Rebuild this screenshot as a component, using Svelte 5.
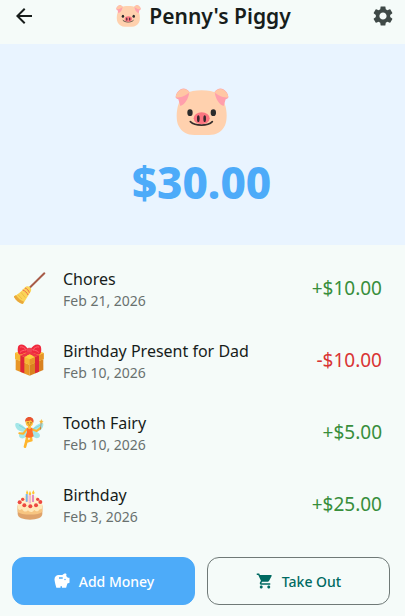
<script lang="ts">
	type Icon = 'broom' | 'gift' | 'fairy' | 'cake';

	interface Transaction {
		id: number;
		icon: Icon;
		title: string;
		date: string;
		amount: number;
	}

	let name = $state("Penny's Piggy");

	let transactions = $state<Transaction[]>([
		{ id: 4, icon: 'broom', title: 'Chores', date: 'Feb 21, 2026', amount: 10 },
		{ id: 3, icon: 'gift', title: 'Birthday Present for Dad', date: 'Feb 10, 2026', amount: -10 },
		{ id: 2, icon: 'fairy', title: 'Tooth Fairy', date: 'Feb 10, 2026', amount: 5 },
		{ id: 1, icon: 'cake', title: 'Birthday', date: 'Feb 3, 2026', amount: 25 }
	]);

	const balance = $derived(transactions.reduce((sum, t) => sum + t.amount, 0));

	function signed(amount: number) {
		return `${amount < 0 ? '-' : '+'}$${Math.abs(amount).toFixed(2)}`;
	}
</script>

{#snippet pig()}
	<svg class="pig" viewBox="163 40 162 144" aria-hidden="true">
		<path d="M243 47c-40 0-60 12-69 40-8 22-8 52 0 67 9 18 26 27 47 27h44c21 0 38-9 47-27 8-15 8-45 0-67-9-28-29-40-69-40z" fill="#ffd1ae" />
		<path d="M206 52c-6-9-17-13-26-8-8 5-15 14-15 23 0 5 5 5 8 7l6 20c14-5 24-20 27-42z" fill="#ff9fac" />
		<path d="M207 53c-6-9-18-13-27-8-8 5-15 14-15 23 16 3 32-7 42-15z" fill="#ffc7a4" />
		<path d="M282 52c6-9 17-13 26-8 8 5 15 14 15 23 0 5-5 5-8 7l-6 20c-14-5-24-20-27-42z" fill="#ff9fac" />
		<path d="M281 53c6-9 18-13 27-8 8 5 15 14 15 23-16 3-32-7-42-15z" fill="#ffc7a4" />
		<ellipse cx="208" cy="114" rx="8" ry="10" fill="#2b2b2b" />
		<ellipse cx="278" cy="114" rx="8" ry="10" fill="#2b2b2b" />
		<path d="M209 141c15 14 52 14 66 0" fill="none" stroke="#352d2b" stroke-width="5" stroke-linecap="round" />
		<ellipse cx="243" cy="131" rx="24" ry="18" fill="#fb7480" />
		<ellipse cx="233" cy="132" rx="4" ry="10" fill="#37272b" />
		<ellipse cx="252" cy="132" rx="4" ry="10" fill="#37272b" />
	</svg>
{/snippet}

{#snippet emoji(icon: Icon)}
	{#if icon === 'broom'}
		<svg viewBox="42 51 96 96" aria-hidden="true">
			<path d="M89 98l44-43" stroke="#a75b48" stroke-width="6" stroke-linecap="round" />
			<path d="M73 99c4-5 11-7 16-3 6 4 6 11 1 17L69 147c-10-2-22-11-28-23 12-5 23-14 32-25z" fill="#fbd457" />
			<path d="M41 124l7-3c6 9 13 15 24 19l-4 7c-11-2-22-11-27-23z" fill="#e9a83c" />
			<path d="M54 119l12 13m-3-20l13 16" stroke="#e8ae3b" stroke-width="2" />
			<path d="M68 105c7 2 13 8 16 15m-9-21c7 2 11 8 13 14" fill="none" stroke="#ed6c4f" stroke-width="3" />
		</svg>
	{:else if icon === 'gift'}
		<svg viewBox="42 42 96 96" aria-hidden="true">
			<path d="M47 87l42 17v33l-42-17z" fill="#e89627" />
			<path d="M130 87l-41 17v33l41-17z" fill="#d98220" />
			<path d="M45 69l43-14 43 14v18l-42 18-44-18z" fill="#f6b735" />
			<path d="M89 88l42-19v18l-42 18z" fill="#e69428" />
			<path d="M45 69l44 19 42-19-43-15z" fill="#ffcb45" />
			<path d="M61 76l12 5v49l-12-5zm44 5l12-5v49l-12 5z" fill="#df2637" />
			<path d="M61 76l40-16 10 4-38 17zm44 5L69 64l9-4 39 16z" fill="#ef3445" />
			<path d="M86 61C75 40 56 40 54 51c-2 10-1 20 5 23 7 0 18-4 27-13zm4 0c9-21 31-22 33-9 2 11 0 20-6 22-8 0-18-4-27-13z" fill="#ef293d" />
			<path d="M60 51c7-2 14 2 19 9-7 0-14 2-19 7m57-16c-7-2-14 2-19 9 7 0 13 2 18 7" fill="none" stroke="#ff6370" stroke-width="3" />
			<path d="M80 77l9-4 9 4-9 8z" fill="#ffd43e" />
			<rect x="81" y="53" width="15" height="14" rx="5" fill="#f04453" />
		</svg>
	{:else if icon === 'fairy'}
		<svg viewBox="42 48 96 96" aria-hidden="true">
			<path d="M80 88C66 71 48 64 46 72s6 24 26 23c-14 1-20 12-10 19 8 4 17-2 21-12z" fill="#a3e6e8" />
			<path d="M96 88c14-17 33-24 34-16s-6 24-25 23c13 1 20 12 11 18-8 4-18-1-22-11z" fill="#a3e6e8" />
			<path d="M79 88L57 76m40 12l23-12" stroke="#7fd6dd" stroke-width="3" />
			<path d="M80 88l-10 13-12-1m38-12l14 5 11-9" fill="none" stroke="#ffb52d" stroke-width="6" stroke-linecap="round" stroke-linejoin="round" />
			<path d="M82 107l-2 14-5 19m17-32l2 13-11 3" fill="none" stroke="#ffb52d" stroke-width="8" stroke-linecap="round" stroke-linejoin="round" />
			<path d="M80 83h17l1 14 3 12c-7 5-17 5-25 1l5-14z" fill="#ff6c2b" />
			<path d="M84 78h9v7q-5 6-9 0z" fill="#ffc245" />
			<ellipse cx="88" cy="67" rx="11" ry="13" fill="#ffc33d" />
			<path d="M76 67c-3-9 5-17 12-16 9 0 15 7 12 17-3-1-5-5-8-7-4 2-10 2-14 1z" fill="#e85430" />
			<path d="M84 68v1m9-1v1" stroke="#57382a" stroke-width="3" stroke-linecap="round" />
			<path d="M85 74q4 3 7 0" fill="none" stroke="#b44833" stroke-width="2" />
			<path d="M121 89l3-24" stroke="#b36c39" stroke-width="2" />
			<path d="M124 57l2 5 5 1-4 3 1 5-4-3-4 3 1-5-4-3 5-1z" fill="#f4b637" />
		</svg>
	{:else}
		<svg viewBox="40 42 96 96" aria-hidden="true">
			<path d="M51 95v25c0 11 17 17 37 17s37-6 37-17V95z" fill="#dfa36b" />
			<path d="M51 92v21c9 11 64 12 74 0V92z" fill="#f7c581" />
			<ellipse cx="88" cy="92" rx="37" ry="17" fill="#fff0cb" />
			<path d="M51 92c0 20 8 17 13 12 5 11 13 11 18 4 6 9 14 7 19-1 7 10 14 3 17-3 4 5 7 0 7-12z" fill="#ffe8b9" />
			<path d="M60 75c3-12 50-13 56 0v12c-9 8-45 8-56 0z" fill="#fff0cb" />
			<path d="M78 60v23m9-23v28m10-26v22" stroke="#dd79bc" stroke-width="5" />
			<path d="M78 60v23" stroke="#6dbfe8" stroke-width="5" />
			<path d="M87 60v28" stroke="#fce9ff" stroke-width="2" />
			<path d="M79 48l4 9q-4 8-7 0zm9 2l4 10q-4 8-8 0zm10-2l4 9q-4 8-8 0z" fill="#ffc52e" />
			<g fill="#ed4941">
				<circle cx="66" cy="76" r="5" />
				<circle cx="111" cy="76" r="5" />
				<circle cx="57" cy="85" r="6" />
				<circle cx="71" cy="94" r="6" />
				<circle cx="89" cy="97" r="6" />
				<circle cx="106" cy="94" r="6" />
				<circle cx="119" cy="84" r="6" />
			</g>
		</svg>
	{/if}
{/snippet}

<div class="page">
	<header>
		<button class="icon-button" aria-label="Back">
			<svg viewBox="0 0 24 24"><path d="M20 11H7.83l5.59-5.59L12 4l-8 8 8 8 1.41-1.41L7.83 13H20v-2z" /></svg>
		</button>
		<h1>{@render pig()}<span>{name}</span></h1>
		<button class="icon-button settings" aria-label="Settings">
			<svg viewBox="0 0 24 24"><path d="M19.14 12.94c.04-.3.06-.61.06-.94 0-.32-.02-.64-.07-.94l2.03-1.58c.18-.14.23-.41.12-.61l-1.92-3.32c-.12-.22-.37-.29-.59-.22l-2.39.96c-.5-.38-1.03-.7-1.62-.94l-.36-2.54c-.04-.24-.24-.41-.48-.41h-3.84c-.24 0-.43.17-.47.41l-.36 2.54c-.59.24-1.13.57-1.62.94l-2.39-.96c-.22-.08-.47 0-.59.22L2.74 8.87c-.12.21-.08.47.12.61l2.03 1.58c-.05.3-.09.63-.09.94s.02.64.07.94l-2.03 1.58c-.18.14-.23.41-.12.61l1.92 3.32c.12.22.37.29.59.22l2.39-.96c.5.38 1.03.7 1.62.94l.36 2.54c.05.24.24.41.48.41h3.84c.24 0 .44-.17.47-.41l.36-2.54c.59-.24 1.13-.56 1.62-.94l2.39.96c.22.08.47 0 .59-.22l1.92-3.32c.12-.22.07-.47-.12-.61l-2.01-1.58zM12 15.6c-1.98 0-3.6-1.62-3.6-3.6s1.62-3.6 3.6-3.6 3.6 1.62 3.6 3.6-1.62 3.6-3.6 3.6z" /></svg>
		</button>
	</header>

	<section class="balance">
		{@render pig()}
		<strong>${balance.toFixed(2)}</strong>
	</section>

	<ul>
		{#each transactions as t (t.id)}
			<li>
				{@render emoji(t.icon)}
				<div class="details">
					<span class="title">{t.title}</span>
					<span class="date">{t.date}</span>
				</div>
				<span class="amount" class:negative={t.amount < 0}>{signed(t.amount)}</span>
			</li>
		{/each}
	</ul>

	<footer>
		<button class="action primary">
			<svg viewBox="0 0 24 24" aria-hidden="true"><path d="M19.83 7.5l-2.27-2.27c.07-.42.18-.81.32-1.15.08-.18.12-.37.12-.58 0-.83-.67-1.5-1.5-1.5-1.64 0-3.09.79-4 2h-5C4.46 4 2 6.46 2 9.5S4.5 21 4.5 21H10v-2h2v2h5.5l1.68-5.59 2.82-.94V7.5h-2.17zM13 9H8V7h5v2zm3 2c-.55 0-1-.45-1-1s.45-1 1-1 1 .45 1 1-.45 1-1 1z" /></svg>
			Add Money
		</button>
		<button class="action">
			<svg viewBox="0 0 24 24" aria-hidden="true"><path d="M7 18c-1.1 0-1.99.9-1.99 2S5.9 22 7 22s2-.9 2-2-.9-2-2-2zM1 2v2h2l3.6 7.59-1.35 2.45c-.16.28-.25.61-.25.96 0 1.1.9 2 2 2h12v-2H7.42c-.14 0-.25-.11-.25-.25l.03-.12.9-1.63h7.45c.75 0 1.41-.41 1.75-1.03l3.58-6.49c.08-.14.12-.31.12-.48 0-.55-.45-1-1-1H5.21l-.94-2H1zm16 16c-1.1 0-1.99.9-1.99 2s.89 2 1.99 2 2-.9 2-2-.9-2-2-2z" /></svg>
			Take Out
		</button>
	</footer>
</div>

<style>
	:global(body) {
		background: #f5fbf9;
	}

	.page {
		font-family: 'Noto Sans', 'Open Sans', sans-serif;
		color: #171d1b;
	}

	svg {
		display: block;
		flex: none;
		fill: currentColor;
	}

	button {
		font: inherit;
		cursor: pointer;
	}

	header {
		display: flex;
		align-items: center;
		justify-content: space-between;
		padding: 0 10px 12px 12px;
	}

	.icon-button {
		padding: 0;
		border: 0;
		background: none;
		color: inherit;
	}

	.icon-button svg {
		width: 24px;
		height: 24px;
	}

	.settings {
		color: #3f4947;
	}

	h1 {
		display: flex;
		align-items: center;
		gap: 8px;
		margin: 0;
		font-size: 21px;
		font-weight: 600;
		line-height: 32px;
	}

	h1 .pig {
		width: 25px;
		height: 24px;
	}

	.balance {
		display: flex;
		flex-direction: column;
		align-items: center;
		gap: 16px;
		padding: 44px 18px 33px 16px;
		background: #e9f4ff;
	}

	.balance .pig {
		width: 54px;
		height: 48px;
	}

	.balance strong {
		font-size: 44px;
		font-weight: 800;
		line-height: 60px;
		color: #4dabf9;
	}

	ul {
		margin: 0;
		padding: 7px 0 9px;
		list-style: none;
	}

	li {
		display: flex;
		align-items: center;
		gap: 17px;
		height: 72px;
		padding: 0 23px 0 14px;
	}

	li svg {
		width: 32px;
		height: 32px;
	}

	.details {
		display: flex;
		flex: 1;
		flex-direction: column;
		min-width: 0;
		padding-top: 2px;
	}

	.title {
		font-size: 16px;
		line-height: 24px;
	}

	.date {
		font-size: 14px;
		line-height: 20px;
		color: #69716f;
	}

	.amount {
		font-size: 19px;
		line-height: 24px;
		color: #388e3c;
	}

	.amount.negative {
		color: #d93434;
	}

	footer {
		display: flex;
		gap: 12px;
		padding: 8px 15px 10px 12px;
	}

	.action {
		display: flex;
		flex: 1;
		align-items: center;
		justify-content: center;
		gap: 8px;
		height: 48px;
		padding: 0 16px;
		border: 1px solid #6f7977;
		border-radius: 12px;
		background: transparent;
		color: #006a62;
		font-size: 14px;
		font-weight: 500;
	}

	.action svg {
		width: 18px;
		height: 18px;
	}

	.primary {
		border-color: #4dabf9;
		background: #4dabf9;
		color: #fff;
	}
</style>
